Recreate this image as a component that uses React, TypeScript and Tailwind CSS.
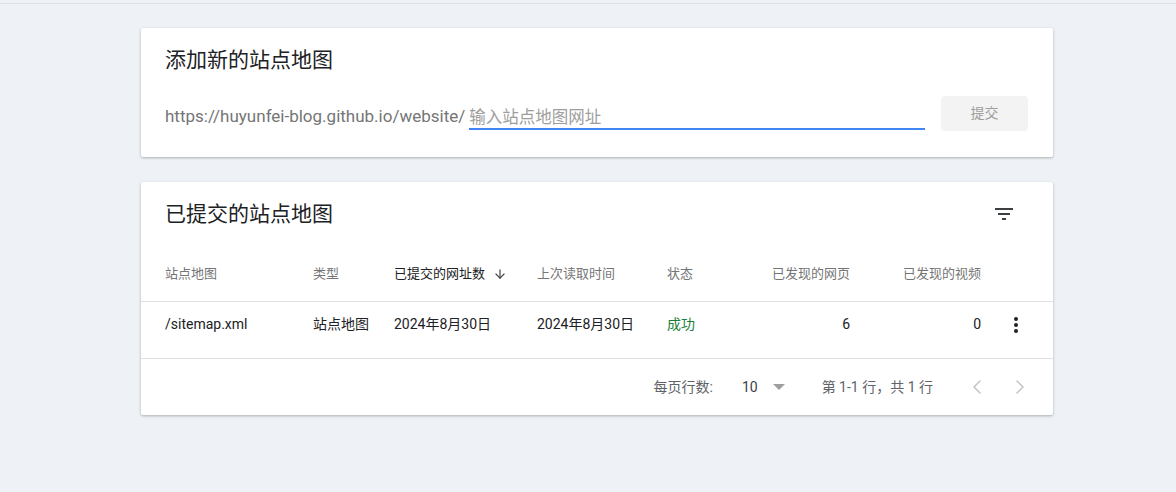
import { ArrowDown, ChevronLeft, ChevronRight } from 'lucide-react'

const font = { fontFamily: 'Roboto, "Noto Sans CJK SC", sans-serif' }

const cols = 'grid grid-cols-[148px_81px_143px_130px_103px_80px_131px_72px]'

function FilterIcon() {
  return (
    <svg width="24" height="24" viewBox="0 0 24 24" className="text-[#3c4043]">
      <path d="M3 6h18v2H3zM6 11h12v2H6zM10 16h4v2h-4z" fill="currentColor" />
    </svg>
  )
}

function MoreIcon() {
  return (
    <svg width="24" height="24" viewBox="0 0 24 24" className="text-[#202124]">
      <circle cx="12" cy="6" r="2" fill="currentColor" />
      <circle cx="12" cy="12" r="2" fill="currentColor" />
      <circle cx="12" cy="18" r="2" fill="currentColor" />
    </svg>
  )
}

export default function App() {
  return (
    <div className="min-h-screen bg-[#eef1f6]" style={font}>
      <div className="h-[4px] border-b border-[#dde0e5]" />
      <div className="pl-[141px] pt-[24px]">
        {/* add sitemap */}
        <div className="w-[912px] bg-white rounded-[2px] shadow-[0_1px_3px_rgba(0,0,0,0.28)] pl-[24px] pr-[25px] pt-[18px] pb-[26px]">
          <h2 className="text-[21px] leading-[28px] text-[#202124]">添加新的站点地图</h2>
          <div className="mt-[22px] flex items-start gap-[16px]">
            <div className="flex-1 flex items-end mt-[8px]">
              <span className="text-[17px] leading-[24px] pb-[2px] text-[#757575] mr-[4px] whitespace-nowrap">
                https://huyunfei-blog.github.io/website/
              </span>
              <input
                type="text"
                placeholder="输入站点地图网址"
                className="flex-1 h-[26px] pt-[3px] border-b-2 border-[#4285f4] text-[16.5px] text-[#202124] placeholder:text-[#9e9e9e] outline-none caret-black"
                style={font}
              />
            </div>
            <button className="w-[87px] h-[35px] rounded-[4px] bg-[#f3f3f3] text-[14px] text-[#9e9e9e]">
              提交
            </button>
          </div>
        </div>

        {/* submitted sitemaps */}
        <div className="mt-[25px] w-[912px] bg-white rounded-[2px] shadow-[0_1px_3px_rgba(0,0,0,0.28)]">
          <div className="flex items-center justify-between pl-[24px] pr-[37px] pt-[18px] pb-[18px]">
            <h2 className="text-[21px] leading-[28px] text-[#202124]">已提交的站点地图</h2>
            <FilterIcon />
          </div>

          <div className={`${cols} pl-[24px] h-[56px] items-center border-b border-[#e0e0e0] text-[13px] text-[#757575]`}>
            <div>站点地图</div>
            <div>类型</div>
            <div className="flex items-center gap-[8px] text-[#202124]">
              已提交的网址数
              <ArrowDown size={14} strokeWidth={2} className="text-[#3c4043]" />
            </div>
            <div>上次读取时间</div>
            <div>状态</div>
            <div className="text-right">已发现的网页</div>
            <div className="text-right">已发现的视频</div>
            <div />
          </div>

          <div className={`${cols} pl-[24px] h-[57px] pb-[11px] items-center border-b border-[#e0e0e0] text-[14px] text-[#202124]`}>
            <div>/sitemap.xml</div>
            <div>站点地图</div>
            <div>2024年8月30日</div>
            <div>2024年8月30日</div>
            <div className="text-[#188038]">成功</div>
            <div className="text-right">6</div>
            <div className="text-right">0</div>
            <div className="pl-[23px] flex items-center">
              <MoreIcon />
            </div>
          </div>

          <div className="h-[56px] flex items-center justify-end pr-[21px] text-[14px] text-[#5f6368]">
            <span>每页行数:</span>
            <span className="ml-[29px] text-[#3c4043]">10</span>
            <svg width="12" height="6" viewBox="0 0 12 6" className="ml-[15px]">
              <path d="M0 0h12L6 6z" fill="#9e9e9e" />
            </svg>
            <span className="ml-[37px]">第 1-1 行，共 1 行</span>
            <ChevronLeft size={24} strokeWidth={1.5} className="ml-[32px] text-[#c4c4c4]" />
            <ChevronRight size={24} strokeWidth={1.5} className="ml-[19px] text-[#c4c4c4]" />
          </div>
        </div>
      </div>
    </div>
  )
}
